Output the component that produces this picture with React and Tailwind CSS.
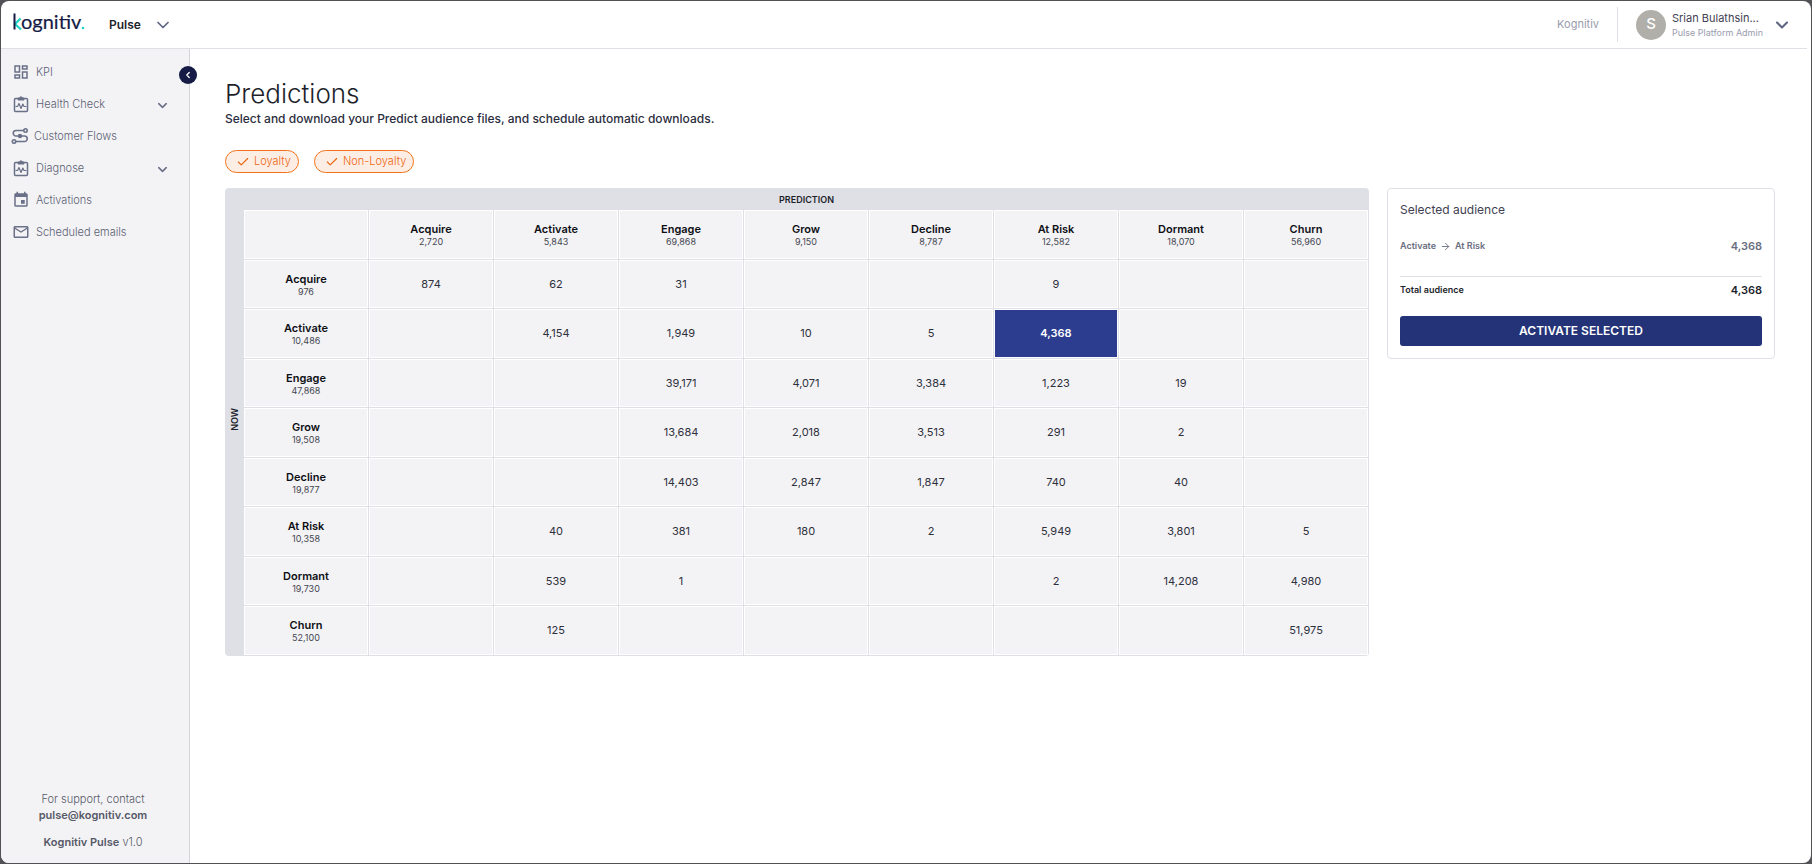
import { ArrowRight, Check, ChevronDown, ChevronLeft } from "lucide-react";
import { MdEvent, MdMailOutline, MdOutlineDashboard } from "react-icons/md";

const Logo = () => (
  <svg viewBox="0 0 78 32" className="h-8 w-[78px]" role="img" aria-label="kognitiv">
    <path d="M8.600 9.500L3 15l6 5.500" stroke="#1fd3c6" strokeWidth="2.300" fill="none" />
    <path d="M2.500 4.500v16" stroke="#151b45" strokeWidth="2" fill="none" />
    <text x="9" y="20" fontFamily="Lato, sans-serif" fontSize="20" fill="#151b45" stroke="#151b45" strokeWidth="0.200">
      ognitiv
    </text>
    <circle cx="71" cy="19" r="1.300" fill="#1fd3c6" />
  </svg>
);

const HealthIcon = ({ className }) => (
  <svg viewBox="0 0 18 18" fill="none" stroke="currentColor" strokeWidth="1.5" strokeLinejoin="round" className={className}>
    <rect x="2.500" y="3.500" width="13" height="13" rx="1" />
    <path d="M6 5V3h1.800a1.200 1.200 0 0 1 2.400 0H12v2z" fill="currentColor" strokeWidth="1" />
    <path d="M3.500 11.500h2l1.500-3 2 5 1.800-4.500 1.200 2.500h2.500" strokeWidth="1.200" />
  </svg>
);

const FlowIcon = ({ className }) => (
  <svg viewBox="0 0 18 18" fill="none" stroke="currentColor" strokeWidth="1.600" className={className}>
    <path d="M12.500 3.500H5a2.750 2.750 0 0 0 0 5.500h8.500a2.750 2.750 0 0 1 0 5.500H4.500" />
    <circle cx="14.500" cy="3.500" r="1.700" />
    <circle cx="3" cy="14.500" r="1.700" />
    <circle cx="9" cy="9" r="2.200" fill="currentColor" stroke="none" />
  </svg>
);

const NAV = [
  { label: "KPI", icon: MdOutlineDashboard },
  { label: "Health Check", icon: HealthIcon, expandable: true },
  { label: "Customer Flows", icon: FlowIcon, tight: true },
  { label: "Diagnose", icon: HealthIcon, expandable: true },
  { label: "Activations", icon: MdEvent },
  { label: "Scheduled emails", icon: MdMailOutline },
];

const COLUMNS = [
  ["Acquire", "2,720"],
  ["Activate", "5,843"],
  ["Engage", "69,868"],
  ["Grow", "9,150"],
  ["Decline", "8,787"],
  ["At Risk", "12,582"],
  ["Dormant", "18,070"],
  ["Churn", "56,960"],
];

const ROWS = [
  { name: "Acquire", total: "976", cells: ["874", "62", "31", "", "", "9", "", ""] },
  { name: "Activate", total: "10,486", cells: ["", "4,154", "1,949", "10", "5", "4,368", "", ""] },
  { name: "Engage", total: "47,868", cells: ["", "", "39,171", "4,071", "3,384", "1,223", "19", ""] },
  { name: "Grow", total: "19,508", cells: ["", "", "13,684", "2,018", "3,513", "291", "2", ""] },
  { name: "Decline", total: "19,877", cells: ["", "", "14,403", "2,847", "1,847", "740", "40", ""] },
  { name: "At Risk", total: "10,358", cells: ["", "40", "381", "180", "2", "5,949", "3,801", "5"] },
  { name: "Dormant", total: "19,730", cells: ["", "539", "1", "", "", "2", "14,208", "4,980"] },
  { name: "Churn", total: "52,100", cells: ["", "125", "", "", "", "", "", "51,975"] },
];

const cellBase = "h-[49px] border-r border-b border-[#dfe0e6] p-px";

const Heading = ({ name, total }) => (
  <div className="flex h-full flex-col items-center justify-center bg-[#f3f3f6] pt-[2px]">
    <span className="text-[11px] leading-[13px] font-semibold text-[#0e0f14]">{name}</span>
    <span className="text-[9px] leading-3 font-normal text-[#44464f]">{total}</span>
  </div>
);

const Header = () => (
  <header className="mr-1 flex h-12 shrink-0 items-center border-b border-[#dfe0e6] pl-[11px]">
    <Logo />
    <button type="button" className="ml-[19px] flex items-center gap-3 text-[12px] font-semibold text-[#1d1f2b]">
      Pulse
      <ChevronDown className="size-5 text-[#5f6480]" strokeWidth={2} />
    </button>
    <div className="ml-auto flex items-center">
      <span className="pr-[18px] text-[11px] text-[#9a9cae]">Kognitiv</span>
      <div className="h-[35px] w-px bg-[#dfe0e6]" />
      <button type="button" className="ml-[18px] flex items-center pr-[15px] text-left">
        <span className="flex size-[30px] items-center justify-center rounded-full bg-[#b0afa9] text-[15px] font-medium text-white">
          S
        </span>
        <span className="ml-[6px] flex w-[96px] flex-col">
          <span className="text-[11px] leading-4 text-[#3f4152]">Srian Bulathsin...</span>
          <span className="text-[9px] leading-[14px] text-[#9a9cae]">Pulse Platform Admin</span>
        </span>
        <ChevronDown className="ml-1 size-5 text-[#5f6480]" strokeWidth={2.500} />
      </button>
    </div>
  </header>
);

const Sidebar = () => (
  <aside className="relative flex w-[189px] shrink-0 flex-col border-r border-[#d3d4d9] bg-[#f3f3f6]">
    <button
      type="button"
      aria-label="Collapse menu"
      className="absolute top-[17px] -right-2 flex size-[18px] items-center justify-center rounded-full bg-[#151b45] text-white"
    >
      <ChevronLeft className="size-[10px]" strokeWidth={3} />
    </button>
    <nav className="flex flex-col pt-[7px] pr-[19px] pl-[10px]">
      {NAV.map(({ label, icon: Icon, expandable, tight }) => (
        <a
          key={label}
          href="#"
          className={`flex h-8 items-center text-[11px] font-light text-[#5d6173] ${tight ? "gap-[5px]" : "gap-[6px] pl-px"}`}
        >
          <Icon className="size-[18px] text-[#6a7087]" />
          {label}
          {expandable && <ChevronDown className="mt-[2px] ml-auto size-[15px] text-[#6a7087]" strokeWidth={2.500} />}
        </a>
      ))}
    </nav>
    <div className="mt-auto pr-1 pb-[13px] text-center text-[11px] leading-4 font-light text-[#565966]">
      <p>For support, contact</p>
      <a href="mailto:pulse@kognitiv.com" className="font-semibold">
        pulse@kognitiv.com
      </a>
      <p className="mt-[11px]">
        <span className="font-semibold">Kognitiv Pulse</span> v1.0
      </p>
    </div>
  </aside>
);

const Chip = ({ children }) => (
  <button
    type="button"
    aria-pressed="true"
    className="flex h-[23px] items-center gap-1 rounded-full border border-[#f0731c] bg-[#fdeee5] pr-[7px] pl-[10px] text-[11px] font-light text-[#ee6510]"
  >
    <Check className="size-[14px]" strokeWidth={2} />
    {children}
  </button>
);

const PredictionTable = () => (
  <div className="min-w-0 flex-1 overflow-hidden rounded-[4px]">
    <table className="h-[468px] w-full table-fixed border-separate border-spacing-0 text-center">
      <colgroup>
        <col className="w-[19px]" />
      </colgroup>
      <tbody>
        <tr className="h-[22px]">
          <th rowSpan={10} scope="rowgroup" className="bg-[#dfe0e6]">
            <span className="inline-block rotate-180 text-[9px] leading-3 font-semibold text-[#1d1f2b] [writing-mode:vertical-rl]">
              NOW
            </span>
          </th>
          <th colSpan={9} scope="colgroup" className="bg-[#dfe0e6] pt-[2px] text-[9px] leading-3 font-semibold text-[#1d1f2b]">
            PREDICTION
          </th>
        </tr>
        <tr className="h-[49px]">
          <td className={cellBase}>
            <div className="h-full bg-[#f3f3f6]" />
          </td>
          {COLUMNS.map(([name, total]) => (
            <th key={name} scope="col" className={cellBase}>
              <Heading name={name} total={total} />
            </th>
          ))}
        </tr>
        {ROWS.map((row) => (
          <tr key={row.name}>
            <th scope="row" className={cellBase}>
              <Heading name={row.name} total={row.total} />
            </th>
            {row.cells.map((value, i) => {
              const selected = row.name === "Activate" && COLUMNS[i][0] === "At Risk";
              return (
                <td key={COLUMNS[i][0]} className={cellBase}>
                  <button
                    type="button"
                    disabled={!value}
                    className={
                      selected
                        ? "block h-full w-full bg-[#2c3c8f] text-[11px] font-semibold text-white"
                        : "block h-full w-full bg-[#f3f3f6] text-[11px] text-[#2e303b]"
                    }
                  >
                    {value}
                  </button>
                </td>
              );
            })}
          </tr>
        ))}
      </tbody>
    </table>
  </div>
);

const AudienceCard = () => (
  <section className="w-[388px] shrink-0 rounded-[4px] border border-[#dfe0e6] p-3">
    <h2 className="text-[12px] leading-[18px] text-[#3f4152]">Selected audience</h2>
    <div className="mt-[19px] flex items-center justify-between font-semibold text-[#6a6e80]">
      <span className="flex items-center gap-1 text-[9px]">
        Activate
        <ArrowRight className="size-[11px]" strokeWidth={2} />
        At Risk
      </span>
      <span className="text-[11px] leading-4">4,368</span>
    </div>
    <div className="mt-[22px] flex items-center justify-between border-t border-[#dfe0e6] pt-[5px] font-semibold text-[#1d1f2b]">
      <span className="text-[9px]">Total audience</span>
      <span className="text-[11px] leading-4">4,368</span>
    </div>
    <button type="button" className="mt-[18px] h-[30px] w-full rounded-[3px] bg-[#243278] text-[12px] font-semibold text-white">
      ACTIVATE SELECTED
    </button>
  </section>
);

export default function App() {
  return (
    <div className="min-h-screen bg-[#515156] p-px font-[Inter,sans-serif]">
      <div className="flex min-h-[calc(100vh-2px)] flex-col overflow-hidden rounded-[8px] bg-white">
        <Header />
        <div className="flex flex-1">
          <Sidebar />
          <main className="min-w-0 flex-1 pt-[27px] pr-9 pl-[35px]">
            <h1 className="text-[26px] leading-9 font-light text-[#1d1f2b]">Predictions</h1>
            <p className="text-[12px] leading-[14px] font-medium text-[#2b2d3d]">
              Select and download your Predict audience files, and schedule automatic downloads.
            </p>
            <div className="mt-6 flex gap-[15px]">
              <Chip>Loyalty</Chip>
              <Chip>Non-Loyalty</Chip>
            </div>
            <div className="mt-[15px] flex items-start gap-[18px]">
              <PredictionTable />
              <AudienceCard />
            </div>
          </main>
        </div>
      </div>
    </div>
  );
}
